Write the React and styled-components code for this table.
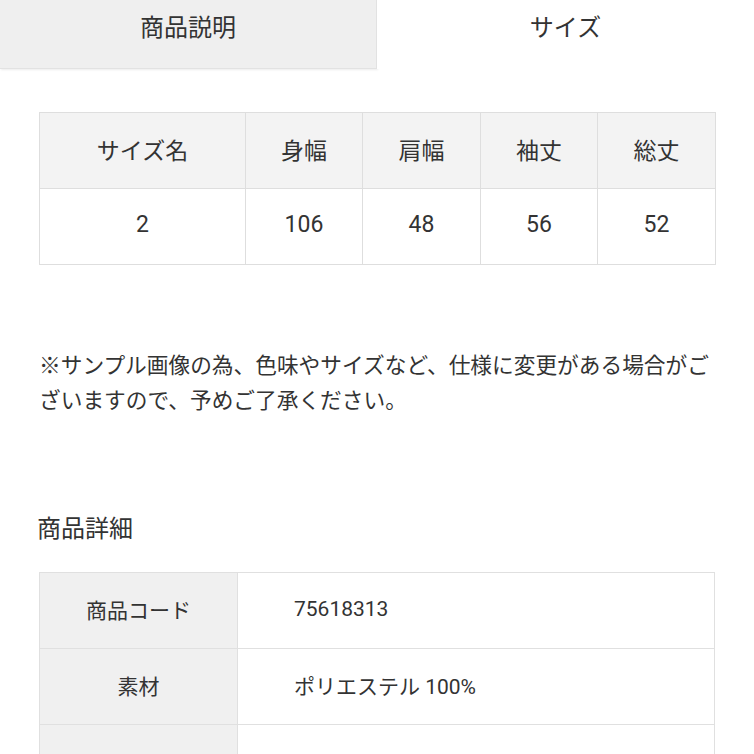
import styled, { createGlobalStyle } from 'styled-components';

const GlobalStyle = createGlobalStyle`
  html, body {
    margin: 0;
    padding: 0;
    background: #ffffff;
  }
  body {
    font-family: Roboto, "Noto Sans CJK JP", sans-serif;
    color: #333333;
  }
`;

const sizeHeaders = ['サイズ名', '身幅', '肩幅', '袖丈', '総丈'];
const sizeRow = ['2', '106', '48', '56', '52'];
const colWidths = [206, 117, 118, 117, 118];

const details = [
  { label: '商品コード', value: '75618313' },
  { label: '素材', value: 'ポリエステル 100%' },
  { label: '', value: '' },
];

function App() {
  return (
    <Page>
      <GlobalStyle />
      <TabBar>
        <Tab>商品説明</Tab>
        <Tab $active>サイズ</Tab>
      </TabBar>

      <Content>
        <SizeTable>
          <colgroup>
            {colWidths.map((w, i) => (
              <col key={i} style={{ width: w }} />
            ))}
          </colgroup>
          <thead>
            <tr>
              {sizeHeaders.map((h) => (
                <SizeHead key={h}>{h}</SizeHead>
              ))}
            </tr>
          </thead>
          <tbody>
            <tr>
              {sizeRow.map((v, i) => (
                <SizeCell key={i}>{v}</SizeCell>
              ))}
            </tr>
          </tbody>
        </SizeTable>

        <Note>
          ※サンプル画像の為、色味やサイズなど、仕様に変更がある場合がございますので、予めご了承ください。
        </Note>

        <SectionTitle>商品詳細</SectionTitle>

        <DetailTable>
          <tbody>
            {details.map((d, i) => (
              <tr key={i}>
                <DetailLabel>{d.label}</DetailLabel>
                <DetailValue>{d.value}</DetailValue>
              </tr>
            ))}
          </tbody>
        </DetailTable>
      </Content>
    </Page>
  );
}

export default App;

const Page = styled.main`
  width: 754px;
  height: 754px;
  overflow: hidden;
  background: #ffffff;
`;

const TabBar = styled.nav`
  display: flex;
  width: 100%;
`;

const Tab = styled.div`
  box-sizing: border-box;
  width: 50%;
  height: 69px;
  padding-top: 11px;
  text-align: center;
  font-size: 24px;
  line-height: 34px;
  color: #333333;
  background: ${(p) => (p.$active ? '#ffffff' : '#efefef')};
  border-right: ${(p) => (p.$active ? 'none' : '1px solid #e2e2e2')};
  border-bottom: ${(p) => (p.$active ? 'none' : '1px solid #e2e2e2')};
  box-shadow: ${(p) => (p.$active ? 'none' : '1px 1px 2px rgba(0,0,0,0.08)')};
`;

const Content = styled.section`
  padding: 0 39px;
`;

const SizeTable = styled.table`
  width: 676px;
  margin-top: 43px;
  border-collapse: collapse;
  table-layout: fixed;
`;

const SizeHead = styled.th`
  height: 71px;
  padding: 0 0 4px;
  font-size: 23px;
  font-weight: 400;
  color: #333333;
  background: #f3f3f3;
  border: 1px solid #dedede;
  text-align: center;
`;

const SizeCell = styled.td`
  height: 71px;
  padding: 0 0 4px;
  font-size: 23px;
  color: #333333;
  background: #ffffff;
  border: 1px solid #dedede;
  text-align: center;
`;

const Note = styled.p`
  width: 676px;
  margin: 83px 0 0;
  font-size: 21.7px;
  line-height: 35px;
  color: #333333;
`;

const SectionTitle = styled.h2`
  margin: 94px 0 0 -2px;
  font-size: 24px;
  font-weight: 400;
  line-height: 35px;
  color: #333333;
`;

const DetailTable = styled.table`
  width: 676px;
  margin-top: 25px;
  border-collapse: collapse;
  table-layout: fixed;
`;

const DetailLabel = styled.th`
  width: 197px;
  height: 71px;
  padding: 0 0 4px;
  font-size: 21px;
  font-weight: 400;
  color: #333333;
  background: #f0f0f0;
  border: 1px solid #e0e0e0;
  text-align: center;
`;

const DetailValue = styled.td`
  height: 71px;
  padding: 0 0 4px 56px;
  font-size: 21px;
  color: #333333;
  background: #ffffff;
  border: 1px solid #e0e0e0;
  text-align: left;
`;
